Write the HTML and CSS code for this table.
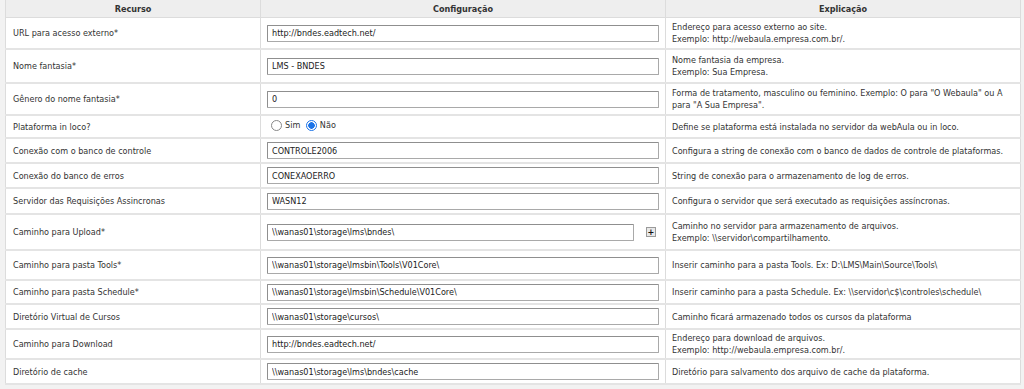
FILE: index.html
```html
<!DOCTYPE html>
<html lang="pt-BR">
<head>
<meta charset="utf-8">
<title>Configurações</title>
<link rel="stylesheet" href="styles.css">
</head>
<body>
<div class="page">
<table class="cfg">
  <colgroup>
    <col class="c1"><col class="c2"><col class="c3">
  </colgroup>
  <thead>
    <tr><th>Recurso</th><th>Configuração</th><th>Explicação</th></tr>
  </thead>
  <tbody>
    <tr>
      <td>URL para acesso externo*</td>
      <td><input class="txt" type="text" value="http://bndes.eadtech.net/"></td>
      <td>Endereço para acesso externo ao site.<br>Exemplo: http://webaula.empresa.com.br/.</td>
    </tr>
    <tr>
      <td>Nome fantasia*</td>
      <td><input class="txt" type="text" value="LMS - BNDES"></td>
      <td>Nome fantasia da empresa.<br>Exemplo: Sua Empresa.</td>
    </tr>
    <tr>
      <td>Gênero do nome fantasia*</td>
      <td><input class="txt" type="text" value="0"></td>
      <td>Forma de tratamento, masculino ou feminino. Exemplo: O para "O Webaula" ou A para "A Sua Empresa".</td>
    </tr>
    <tr>
      <td>Plataforma in loco?</td>
      <td>
        <label class="opt"><span class="radio"></span>Sim</label>
        <label class="opt"><span class="radio on"></span>Não</label>
      </td>
      <td>Define se plataforma está instalada no servidor da webAula ou in loco.</td>
    </tr>
    <tr>
      <td>Conexão com o banco de controle</td>
      <td><input class="txt" type="text" value="CONTROLE2006"></td>
      <td>Configura a string de conexão com o banco de dados de controle de plataformas.</td>
    </tr>
    <tr>
      <td>Conexão do banco de erros</td>
      <td><input class="txt" type="text" value="CONEXAOERRO"></td>
      <td>String de conexão para o armazenamento de log de erros.</td>
    </tr>
    <tr>
      <td>Servidor das Requisições Assincronas</td>
      <td><input class="txt" type="text" value="WASN12"></td>
      <td>Configura o servidor que será executado as requisições assíncronas.</td>
    </tr>
    <tr>
      <td>Caminho para Upload*</td>
      <td>
        <div class="with-btn">
          <input class="txt" type="text" value="\\wanas01\storage\lms\bndes\">
          <span class="plus">+</span>
        </div>
      </td>
      <td>Caminho no servidor para armazenamento de arquivos.<br>Exemplo: \\servidor\compartilhamento.</td>
    </tr>
    <tr>
      <td>Caminho para pasta Tools*</td>
      <td><input class="txt" type="text" value="\\wanas01\storage\lmsbin\Tools\V01Core\"></td>
      <td>Inserir caminho para a pasta Tools. Ex: D:\LMS\Main\Source\Tools\</td>
    </tr>
    <tr>
      <td>Caminho para pasta Schedule*</td>
      <td><input class="txt" type="text" value="\\wanas01\storage\lmsbin\Schedule\V01Core\"></td>
      <td>Inserir caminho para a pasta Schedule. Ex: \\servidor\c$\controles\schedule\</td>
    </tr>
    <tr>
      <td>Diretório Virtual de Cursos</td>
      <td><input class="txt" type="text" value="\\wanas01\storage\cursos\"></td>
      <td>Caminho ficará armazenado todos os cursos da plataforma</td>
    </tr>
    <tr>
      <td>Caminho para Download</td>
      <td><input class="txt" type="text" value="http://bndes.eadtech.net/"></td>
      <td>Endereço para download de arquivos.<br>Exemplo: http://webaula.empresa.com.br/.</td>
    </tr>
    <tr>
      <td>Diretório de cache</td>
      <td><input class="txt" type="text" value="\\wanas01\storage\lms\bndes\cache"></td>
      <td>Diretório para salvamento dos arquivo de cache da plataforma.</td>
    </tr>
  </tbody>
</table>
</div>
</body>
</html>
```
FILE: styles.css
```css
html, body {
  margin: 0;
  padding: 0;
  background: #f2f2f2;
}
body {
  font-family: "DejaVu Sans Condensed", "Liberation Sans", Arial, sans-serif;
  font-size: 9px;
  color: #333;
}
.page {
  padding: 0 4px 0 5px;
}
.cfg {
  width: 1015px;
  border-collapse: collapse;
  table-layout: fixed;
  background: #fff;
}
.c1 { width: 255px; }
.c2 { width: 405px; }
.c3 { width: 355px; }
.cfg th {
  background: #eeeeee;
  font-weight: bold;
  color: #333;
  height: 17px;
  padding: 0;
  text-align: center;
  border: 1px solid #dcdcdc;
  border-top: 0;
}
.cfg td {
  border: 1px solid #dcdcdc;
  border-bottom-width: 2px;
  border-bottom-color: #e4e4e4;
  padding: 0 6px;
  height: 23px;
  line-height: 12px;
  vertical-align: middle;
}
.cfg td:first-child {
  padding-left: 7px;
}
.cfg tbody tr:nth-child(1) td { height: 30px; }
.cfg tbody tr:nth-child(2) td { height: 32px; }
.cfg tbody tr:nth-child(3) td { height: 30px; }
.cfg tbody tr:nth-child(4) td { height: 21px; }
.cfg tbody tr:nth-child(5) td { height: 23px; }
.cfg tbody tr:nth-child(6) td { height: 23px; }
.cfg tbody tr:nth-child(7) td { height: 24px; }
.cfg tbody tr:nth-child(8) td { height: 34px; }
.cfg tbody tr:nth-child(9) td { height: 28px; }
.cfg tbody tr:nth-child(10) td { height: 22px; }
.cfg tbody tr:nth-child(11) td { height: 23px; }
.cfg tbody tr:nth-child(12) td { height: 28px; }
.cfg tbody tr:nth-child(13) td { height: 23px; }
.txt {
  display: block;
  box-sizing: border-box;
  width: 100%;
  height: 17px;
  margin: 0;
  padding: 0 4px;
  font: inherit;
  color: #222;
  border: 1px solid #a9a9a9;
  border-top-color: #8f8f8f;
  border-left-color: #8f8f8f;
  border-radius: 1px;
  background: #fff;
  outline: none;
}
.with-btn {
  display: flex;
  align-items: center;
  gap: 12px;
}
.with-btn .txt {
  width: 367px;
  flex: none;
}
.plus {
  width: 8px;
  height: 8px;
  border: 1px solid #9a9a9a;
  background: #e8e8e8;
  font-size: 9px;
  line-height: 8px;
  text-align: center;
  font-weight: bold;
  color: #111;
}
.opt {
  display: inline-flex;
  align-items: center;
  margin-right: 3px;
}
.opt:first-child { margin-left: 4px; }
.radio {
  width: 11px;
  height: 11px;
  border: 1px solid #888;
  border-radius: 50%;
  background: #fff;
  margin-right: 3px;
  box-sizing: border-box;
}
.radio.on {
  border-color: #1a73e8;
  background: radial-gradient(circle, #1a73e8 0 3px, #fff 3.5px);
}
```
